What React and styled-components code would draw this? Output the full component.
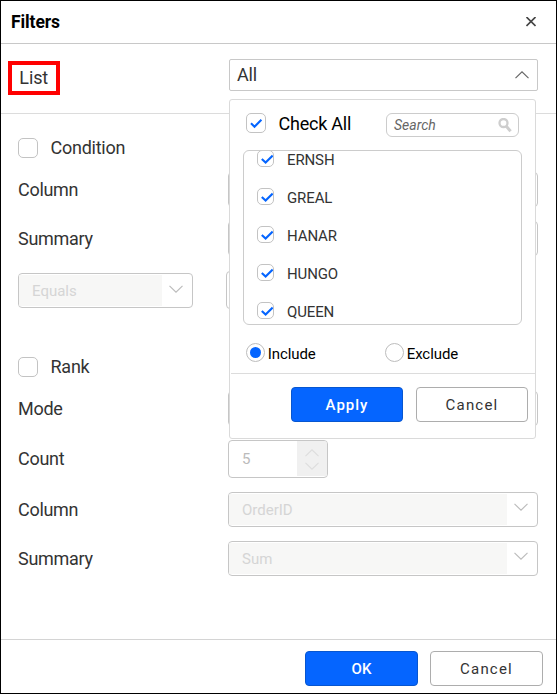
import React from "react";
import styled, { createGlobalStyle } from "styled-components";

const GlobalStyle = createGlobalStyle`
  *, *::before, *::after { box-sizing: border-box; }
  body { margin: 0; background: #fff; font-family: Roboto, "Liberation Sans", sans-serif; }
`;

const Dialog = styled.div`
  width: 557px;
  height: 694px;
  border: 1px solid #000;
  background: #fff;
  color: #333;
  display: flex;
  flex-direction: column;
  overflow: hidden;
`;

const Header = styled.header`
  height: 43px;
  flex: none;
  display: flex;
  align-items: center;
  justify-content: space-between;
  padding: 0 20px 0 10px;
  border-bottom: 1px solid #c8c8c8;
`;

const Title = styled.h1`
  margin: 0;
  font-size: 17.5px;
  line-height: 20px;
  font-weight: 700;
  letter-spacing: -0.1px;
  color: #000;
`;

const ListSection = styled.section`
  height: 70px;
  flex: none;
  display: flex;
  align-items: flex-start;
  justify-content: space-between;
  padding: 15px 18px 0 7px;
  border-bottom: 1px solid #dcdcdc;
`;

const ListTag = styled.div`
  width: 52px;
  height: 34px;
  margin-top: 2px;
  border: 4px solid #f00;
  padding-left: 7.3px;
  font-size: 18px;
  line-height: 25px;
  letter-spacing: -0.1px;
`;

const PickerAnchor = styled.div`
  position: relative;
  width: 309px;
`;

const PickerField = styled.div`
  height: 32px;
  display: flex;
  align-items: center;
  justify-content: space-between;
  padding: 0 8px 0 7px;
  border: 1px solid #c8c8c8;
  border-radius: 2px;
  font-size: 18px;
  letter-spacing: -0.2px;
`;

const PickerValue = styled.span`
  padding-bottom: 2px;
`;

const Popup = styled.div`
  position: absolute;
  z-index: 2;
  top: 40px;
  left: 0;
  width: 307px;
  height: 340px;
  border: 1px solid #dadada;
  border-radius: 3px;
  background: #fff;
  color: #000;
`;

const PopupTop = styled.div`
  display: flex;
  align-items: flex-start;
  padding: 13px 16px 0;
  height: 50px;
`;

const CheckAllLabel = styled.span`
  margin-left: 12.5px;
  width: 107.5px;
  font-size: 18px;
  line-height: 22px;
  letter-spacing: -0.23px;
`;

const Box = styled.span`
  flex: none;
  display: flex;
  width: ${(p) => p.$size}px;
  height: ${(p) => p.$size}px;
  border: 1px solid #c3c3c3;
  border-radius: 5px;
  background: #fff;
`;

const Search = styled.div`
  width: 133px;
  height: 24px;
  display: flex;
  align-items: center;
  justify-content: space-between;
  padding: 0 6px 0 7px;
  border: 1px solid #ccc;
  border-radius: 6px;
  font-size: 14px;
  font-style: italic;
  color: #666;
`;

const Items = styled.div`
  width: 279px;
  height: 175px;
  margin-left: 13px;
  padding-left: 13px;
  border: 1px solid #ccc;
  border-radius: 6px;
  overflow: hidden;
`;

const Item = styled.div`
  display: flex;
  align-items: flex-start;
  gap: 13px;
  height: 38px;
  font-size: 15px;
  line-height: 21px;
  letter-spacing: -0.12px;
  color: #333;

  &:first-child { margin-top: -1px; }
`;

const Radios = styled.div`
  display: flex;
  height: 48px;
  padding: 18px 16px 0;
`;

const Radio = styled.div`
  display: flex;
  flex: none;
  gap: 2.7px;
  width: 139px;
  font-size: 15px;
  line-height: 22px;
  letter-spacing: -0.07px;
`;

const RadioDot = styled.span`
  width: 19px;
  height: 19px;
  flex: none;
  border: 1px solid #bdbdbd;
  border-radius: 50%;
  padding: 3px;

  &::before {
    content: "";
    display: block;
    width: 11px;
    height: 11px;
    border-radius: 50%;
    background: ${(p) => (p.$on ? "#0565ff" : "transparent")};
  }
`;

const PopupActions = styled.div`
  display: flex;
  justify-content: flex-end;
  gap: 13px;
  margin-left: 1px;
  padding: 13px 7px 0 0;
  border-top: 1px solid #dcdcdc;
`;

const Button = styled.button`
  width: ${(p) => p.$width}px;
  height: 35px;
  padding: 0;
  border: 1px solid ${(p) => (p.$primary ? "#0756d0" : "#adadad")};
  border-radius: 4px;
  background: ${(p) => (p.$primary ? "#0565ff" : "#fff")};
  color: ${(p) => (p.$primary ? "#fff" : "#333")};
  font-family: inherit;
  font-size: 15px;
  font-weight: ${(p) => (p.$primary ? 500 : 400)};
  letter-spacing: ${(p) => p.$spacing ?? 1}px;
`;

const Body = styled.main`
  flex: 1;
  padding: 10px 18px 0 17px;
`;

const Row = styled.div`
  display: flex;
  align-items: center;
  height: ${(p) => p.$height}px;
`;

const Label = styled.span`
  width: 210px;
  font-size: 18px;
  line-height: 22px;
  letter-spacing: -0.3px;
`;

const GroupLabel = styled.span`
  margin-left: 12.5px;
  font-size: 18px;
  line-height: 22px;
  letter-spacing: -0.25px;
`;

const SelectShell = styled.div`
  width: ${(p) => p.$width}px;
  height: 35px;
  display: flex;
  border: 1px solid #c6c6c6;
  border-radius: 4px;
  overflow: hidden;
`;

const SelectValue = styled.span`
  flex: 1;
  padding-left: 13px;
  margin: 1px 0;
  background: #f7f7f6;
  color: #d5d5d5;
  font-size: 15px;
  line-height: 33px;
`;

const SelectArrow = styled.span`
  width: 30px;
  display: flex;
  justify-content: center;
  padding: ${(p) => p.$top}px 2px 0 0;
`;

const NumberField = styled.div`
  width: ${(p) => p.$width}px;
  height: 38px;
  display: flex;
  border: 1px solid #c6c6c6;
  border-radius: 4px;
  overflow: hidden;
`;

const NumberValue = styled.span`
  flex: 1;
  padding-left: 13px;
  font-size: 15px;
  line-height: 36px;
  color: #bbb;
`;

const Spinner = styled.span`
  width: 30px;
  margin-bottom: 1px;
  display: flex;
  flex-direction: column;
  align-items: center;
  gap: 5px;
  padding-top: 8px;
  background: #f0f0f0;
`;

const Footer = styled.footer`
  height: 54px;
  flex: none;
  display: flex;
  justify-content: flex-end;
  gap: 12px;
  padding: 11px 13px 0;
  border-top: 1px solid #d4d4d4;
`;

const Icon = styled.svg`
  display: block;
  flex: none;
`;

const Chevron = ({ up, color, width = 14, height = 8 }) => (
  <Icon width={width} height={height} viewBox="0 0 14 8" fill="none" stroke={color} strokeWidth="1.15">
    <path d={up ? "M.5 7.2 7 .8l6.5 6.4" : "M.5.8 7 7.2 13.5.8"} />
  </Icon>
);

const Check = ({ size = 20, checked }) => (
  <Box $size={size}>
    {checked && (
      <Icon width={size - 2} height={size - 2} viewBox={`0 0 ${size - 2} ${size - 2}`} fill="none" stroke="#0565ff" strokeWidth="2.1">
        <path d={size === 20 ? "M4 9.2 7.5 12.7 14.4 5.7" : "M3.8 8 7.6 11.6 14.7 4.6"} />
      </Icon>
    )}
  </Box>
);

const CloseIcon = () => (
  <Icon width="10" height="10" viewBox="0 0 10 10" stroke="#444" strokeWidth="1.6">
    <path d="m.5 0 9 9m0-9-9 9" />
  </Icon>
);

const SearchIcon = () => (
  <Icon width="14" height="15" viewBox="0 0 14 15" fill="none" stroke="#cecece">
    <circle cx="5.5" cy="5" r="4" strokeWidth="2.3" />
    <path d="m8.3 8.2 4.3 5" strokeWidth="3" />
  </Icon>
);

const DisabledSelect = ({ value, width = 310, arrowTop = 10 }) => (
  <SelectShell $width={width}>
    <SelectValue>{value}</SelectValue>
    <SelectArrow $top={arrowTop}><Chevron color="#bcbcbc" /></SelectArrow>
  </SelectShell>
);

const Spacer = styled.div`
  height: ${(p) => p.$height}px;
`;

const Gap = styled.span`
  width: 33px;
`;

const customers = ["ERNSH", "GREAL", "HANAR", "HUNGO", "QUEEN"];

export default function App() {
  return (
    <>
      <GlobalStyle />
      <Dialog>
        <Header>
          <Title>Filters</Title>
          <CloseIcon />
        </Header>
        <ListSection>
          <ListTag>List</ListTag>
          <PickerAnchor>
            <PickerField>
              <PickerValue>All</PickerValue>
              <Chevron up color="#666" />
            </PickerField>
            <Popup>
              <PopupTop>
                <Check checked />
                <CheckAllLabel>Check All</CheckAllLabel>
                <Search>
                  Search
                  <SearchIcon />
                </Search>
              </PopupTop>
              <Items>
                {customers.map((name) => (
                  <Item key={name}>
                    <Check size={17} checked />
                    {name}
                  </Item>
                ))}
              </Items>
              <Radios>
                <Radio><RadioDot $on />Include</Radio>
                <Radio><RadioDot />Exclude</Radio>
              </Radios>
              <PopupActions>
                <Button $width={112} $primary>Apply</Button>
                <Button $width={112} $spacing={1.2}>Cancel</Button>
              </PopupActions>
            </Popup>
          </PickerAnchor>
        </ListSection>
        <Body>
          <Row $height={48}>
            <Check />
            <GroupLabel>Condition</GroupLabel>
          </Row>
          <Row $height={35}>
            <Label>Column</Label>
            <DisabledSelect value="" />
          </Row>
          <Spacer $height={14} />
          <Row $height={35}>
            <Label>Summary</Label>
            <DisabledSelect value="" />
          </Row>
          <Spacer $height={15} />
          <Row $height={38}>
            <DisabledSelect value="Equals" width={175} arrowTop={11} />
            <Gap />
            <NumberField $width={140} />
          </Row>
          <Spacer $height={38} />
          <Row $height={40}>
            <Check />
            <GroupLabel>Rank</GroupLabel>
          </Row>
          <Spacer $height={4} />
          <Row $height={35}>
            <Label>Mode</Label>
            <DisabledSelect value="" />
          </Row>
          <Spacer $height={14} />
          <Row $height={38}>
            <Label>Count</Label>
            <NumberField $width={100}>
              <NumberValue>5</NumberValue>
              <Spinner>
                <Chevron up color="#ddd" />
                <Chevron color="#ddd" />
              </Spinner>
            </NumberField>
          </Row>
          <Spacer $height={14} />
          <Row $height={35}>
            <Label>Column</Label>
            <DisabledSelect value="OrderID" />
          </Row>
          <Spacer $height={14} />
          <Row $height={35}>
            <Label>Summary</Label>
            <DisabledSelect value="Sum" />
          </Row>
        </Body>
        <Footer>
          <Button $width={113} $primary $spacing={0.2}>OK</Button>
          <Button $width={113} $spacing={1.2}>Cancel</Button>
        </Footer>
      </Dialog>
    </>
  );
}
